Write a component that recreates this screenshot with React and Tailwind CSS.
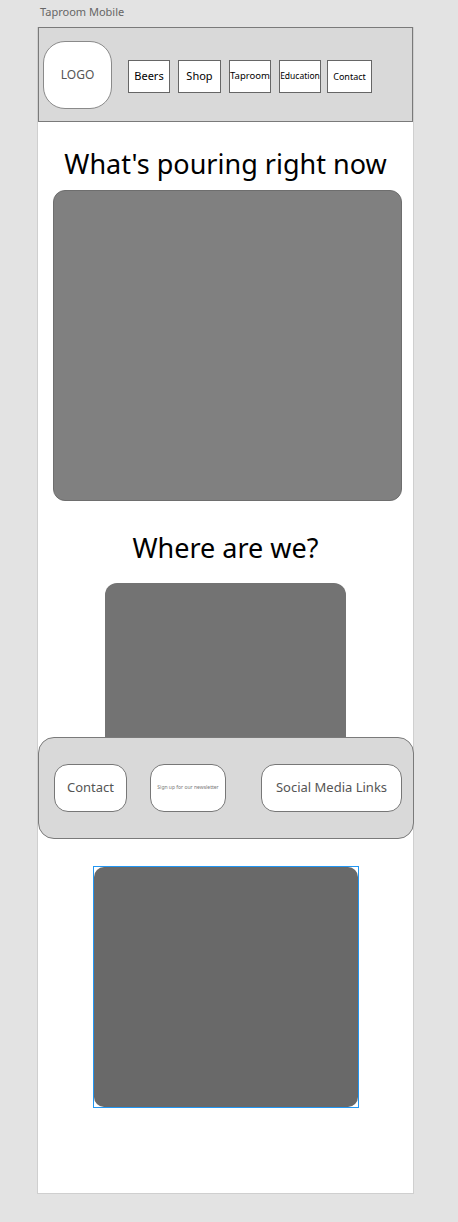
import React from "react";

const navItems = [
  { label: "Beers", box: "w-[42px]", text: "text-[11px]" },
  { label: "Shop", box: "ml-[8px] w-[43px]", text: "text-[11px]" },
  { label: "Taproom", box: "ml-[8px] w-[42px]", text: "text-[9.5px]" },
  { label: "Education", box: "ml-[8px] w-[42px]", text: "text-[8.5px]" },
  { label: "Contact", box: "ml-[6px] w-[45px]", text: "text-[9px]" },
];

const App = () => {
  return (
    <div className="min-h-[1222px] w-[458px] bg-[#e3e3e3] font-['Noto_Sans',sans-serif] overflow-hidden">
      <div className="h-[27px] pl-[40px] pt-[5px] text-[11px] leading-[13px] text-[#666]">
        Taproom Mobile
      </div>

      <div className="relative ml-[37px] w-[377px] h-[1167px] bg-white border-x border-b border-[#cfcfcf]">
        {/* header */}
        <div className="h-[95px] bg-[#d9d9d9] border border-[#7a7a7a] flex items-start">
          <div className="ml-[4px] mt-[13px] w-[69px] h-[68px] rounded-[22px] bg-white border border-[#8a8a8a] flex items-center justify-center text-[12px] text-[#555]">
            LOGO
          </div>
          <div className="ml-[16px] mt-[32px] flex">
            {navItems.map((item) => (
              <div
                key={item.label}
                className={`${item.box} h-[33px] bg-white border border-[#666] flex items-center justify-center ${item.text} text-black whitespace-nowrap`}
              >
                {item.label}
              </div>
            ))}
          </div>
        </div>

        {/* content */}
        <div className="flex flex-col items-center">
          <h1 className="mt-[25px] text-[27px] leading-[34px] text-black">
            What's pouring right now
          </h1>
          <div className="mt-[9px] self-start ml-[15px] w-[349px] h-[311px] rounded-[12px] bg-[#808080] border border-[#6e6e6e]"></div>

          <h2 className="mt-[30px] text-[27px] leading-[34px] text-black">
            Where are we?
          </h2>
          <div className="mt-[18px] w-[241px] h-[210px] rounded-[12px] bg-[#737373]"></div>

          <h2 className="mt-[10px] text-[27px] leading-[34px] text-black">
            Happy hours
          </h2>

          <div className="mt-[29px] w-[266px] h-[242px] border border-[#2196f3]">
            <div className="w-full h-full rounded-[10px] bg-[#696969]"></div>
          </div>
        </div>

        {/* floating footer */}
        <div className="absolute left-0 top-[710px] w-[376px] h-[102px] rounded-[16px] bg-[#d9d9d9] border border-[#7a7a7a] flex items-start">
          <div className="ml-[15px] mt-[26px] w-[73px] h-[48px] rounded-[14px] bg-white border border-[#777] flex items-center justify-center text-[13px] text-[#555]">
            Contact
          </div>
          <div className="ml-[23px] mt-[26px] w-[76px] h-[48px] rounded-[14px] bg-white border border-[#777] flex items-center justify-center text-[5px] text-[#777] whitespace-nowrap">
            Sign up for our newsletter
          </div>
          <div className="ml-[35px] mt-[26px] w-[141px] h-[48px] rounded-[14px] bg-white border border-[#777] flex items-center justify-center text-[13px] text-[#555]">
            Social Media Links
          </div>
        </div>
      </div>
    </div>
  );
};

export default App;
